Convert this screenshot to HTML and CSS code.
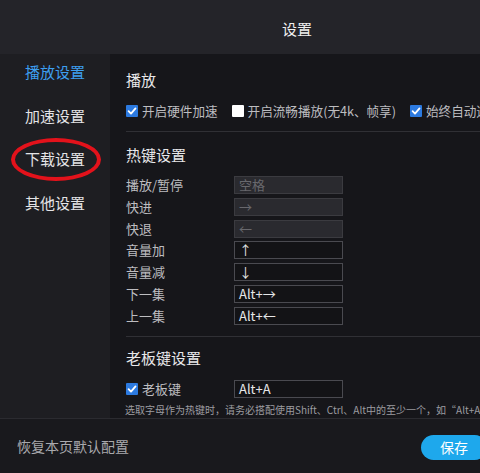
FILE: index.html
```html
<!DOCTYPE html>
<html lang="zh-CN">
<head>
<meta charset="utf-8">
<title>设置</title>
<link rel="stylesheet" href="styles.css">
</head>
<body>
<div class="app">
  <header class="titlebar">设置</header>

  <div class="main">
    <nav class="sidebar">
      <a class="nav-item active">播放设置</a>
      <a class="nav-item">加速设置</a>
      <a class="nav-item marked">下载设置<span class="ring"></span></a>
      <a class="nav-item">其他设置</a>
    </nav>

    <section class="content">
      <h2 class="sec-title">播放</h2>
      <div class="check-row">
        <label class="check"><span class="box on"><svg viewBox="0 0 12 12"><path d="M2.6 6.2 L5 8.6 L9.5 3.4" /></svg></span>开启硬件加速</label>
        <label class="check"><span class="box"></span>开启流畅播放(无4k、帧享)</label>
        <label class="check"><span class="box on"><svg viewBox="0 0 12 12"><path d="M2.6 6.2 L5 8.6 L9.5 3.4" /></svg></span>始终自动选择最高画质</label>
      </div>
      <hr class="divider">

      <h2 class="sec-title">热键设置</h2>
      <div class="keys">
        <div class="key-row"><span class="key-label">播放/暂停</span><span class="key-input off">空格</span></div>
        <div class="key-row"><span class="key-label">快进</span><span class="key-input off">→</span></div>
        <div class="key-row"><span class="key-label">快退</span><span class="key-input off">←</span></div>
        <div class="key-row"><span class="key-label">音量加</span><span class="key-input">↑</span></div>
        <div class="key-row"><span class="key-label">音量减</span><span class="key-input">↓</span></div>
        <div class="key-row"><span class="key-label">下一集</span><span class="key-input">Alt+→</span></div>
        <div class="key-row"><span class="key-label">上一集</span><span class="key-input">Alt+←</span></div>
      </div>
      <hr class="divider divider-2">

      <h2 class="sec-title boss-title">老板键设置</h2>
      <div class="key-row boss-row">
        <label class="check key-label"><span class="box on"><svg viewBox="0 0 12 12"><path d="M2.6 6.2 L5 8.6 L9.5 3.4" /></svg></span>老板键</label>
        <span class="key-input">Alt+A</span>
      </div>
      <p class="hint">选取字母作为热键时，请务必搭配使用Shift、Ctrl、Alt中的至少一个，如“Alt+A”</p>
    </section>
  </div>

  <footer class="footer">
    <span class="reset">恢复本页默认配置</span>
    <button class="save">保存</button>
  </footer>
</div>
</body>
</html>
```

FILE: styles.css
```css
* {
  box-sizing: border-box;
}

html, body {
  margin: 0;
  padding: 0;
  width: 480px;
  height: 473px;
  overflow: hidden;
  background: #16161a;
}

.app {
  width: 594px;
  height: 473px;
  display: flex;
  flex-direction: column;
  font-family: "Noto Sans CJK SC", "Noto Sans", sans-serif;
  color: #d8d8da;
}

/* title bar */
.titlebar {
  height: 54px;
  flex: none;
  background: #242429;
  color: #f0f0f0;
  font-size: 15px;
  display: flex;
  align-items: center;
  justify-content: center;
  padding-top: 2px;
}

.main {
  flex: 1;
  display: flex;
  min-height: 0;
}

/* left navigation */
.sidebar {
  width: 110px;
  flex: none;
  background: #1e1e22;
  display: flex;
  flex-direction: column;
  align-items: center;
  gap: 23.5px;
  padding-top: 8px;
}

.nav-item {
  position: relative;
  font-size: 15px;
  line-height: 20px;
  color: #e4e4e6;
}

.nav-item.active {
  color: #3d9ff0;
}

.ring {
  position: absolute;
  left: -14px;
  top: -11px;
  width: 90px;
  height: 43px;
  border: 4.5px solid #e3121b;
  border-radius: 50%;
}

/* settings panel */
.content {
  flex: 1;
  background: #16161a;
  padding: 16px 0 0 16px;
  overflow: hidden;
}

.sec-title {
  margin: 0;
  font-size: 15px;
  line-height: 20px;
  font-weight: normal;
  color: #e8e8ea;
}

.check-row {
  display: flex;
  gap: 14px;
  margin-top: 11px;
  white-space: nowrap;
}

.check {
  display: flex;
  align-items: center;
  gap: 4px;
  font-size: 12.6px;
  line-height: 20px;
  color: #bdbdc0;
}

.box {
  width: 12px;
  height: 12px;
  flex: none;
  background: #ffffff;
  border-radius: 1px;
  display: flex;
}

.box.on {
  background: #2c7ae0;
}

.box svg {
  width: 12px;
  height: 12px;
}

.box path {
  fill: none;
  stroke: #ffffff;
  stroke-width: 1.8;
  stroke-linecap: round;
  stroke-linejoin: round;
}

.divider {
  margin: 10px 0 0 0;
  border: none;
  height: 1px;
  background: #303035;
}

.divider + .sec-title {
  margin-top: 13px;
}

.keys {
  margin-top: 11px;
  display: flex;
  flex-direction: column;
  gap: 3.8px;
}

.key-row {
  display: flex;
  align-items: center;
  height: 18px;
}

.key-label {
  width: 108px;
  flex: none;
  font-size: 13px;
  line-height: 18px;
  color: #bdbdc0;
}

.key-input {
  width: 109px;
  height: 18px;
  border: 1px solid #4a4a50;
  background: #131316;
  color: #e6e6e8;
  font-size: 13px;
  line-height: 16px;
  padding-left: 4px;
  white-space: nowrap;
}

.key-input.off {
  background: #2a2a2f;
  border-color: #3b3b40;
  color: #68686d;
}

.divider-2 {
  margin-top: 11px;
}

.boss-title {
  margin-top: 11px !important;
}

.boss-row {
  margin-top: 12px;
}

.hint {
  margin: 5px 0 0 -1px;
  font-size: 10px;
  line-height: 14px;
  color: #9c9ca0;
  white-space: nowrap;
}

/* bottom bar */
.footer {
  height: 55px;
  flex: none;
  background: #19191d;
  border-top: 1px solid #2b2b30;
  display: flex;
  align-items: center;
  justify-content: space-between;
  padding: 0 107px 0 17px;
}

.reset {
  font-size: 14px;
  color: #a9a9ad;
}

.save {
  width: 66px;
  height: 25px;
  border: none;
  border-radius: 13px;
  background: #1ea8ec;
  color: #ffffff;
  font-family: inherit;
  font-size: 14px;
  line-height: 25px;
  padding: 0;
  margin-top: 2px;
}
```
